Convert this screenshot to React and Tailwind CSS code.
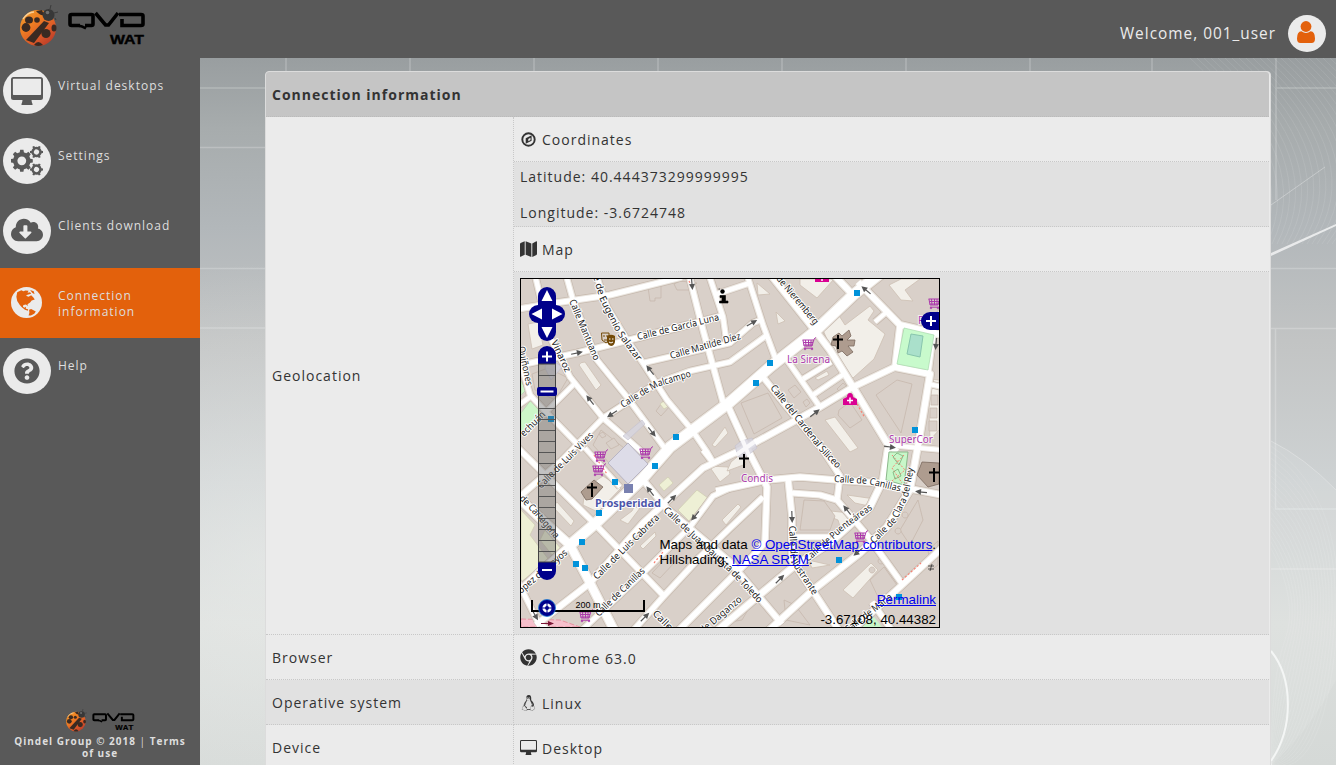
import React from "react";
import {
  FaCloudDownloadAlt,
  FaQuestionCircle,
  FaMap,
  FaChrome,
  FaLinux,
} from "react-icons/fa";

/* ---------- logo and icons ---------- */

function Logo({ className }) {
  return (
    <svg viewBox="0 0 126 42" className={className} aria-label="QVD WAT">
      <defs>
        <linearGradient id="bug" x1="0" y1="0" x2="0.8" y2="1">
          <stop offset="0" stopColor="#f0a030" />
          <stop offset="0.4" stopColor="#ee7d22" />
          <stop offset="0.7" stopColor="#dc5a28" />
          <stop offset="1" stopColor="#b83a2a" />
        </linearGradient>
      </defs>
      <g>
        <circle cx="18" cy="23" r="18" fill="url(#bug)" />
        <path d="M24 16L29 18L14 38L6 35Z" fill="#3a2a22" />
        <g fill="#3a2a22">
          <ellipse cx="9" cy="15" rx="4" ry="3.5" />
          <circle cx="17" cy="15" r="2.8" />
          <circle cx="6" cy="22.500" r="4.400" />
          <circle cx="26" cy="28.500" r="4.600" />
          <ellipse cx="34" cy="23" rx="2.500" ry="3.500" />
          <path d="M14 40Q18 34 23 40Q18 42 14 40Z" />
          <path d="M16 6Q20 11 24 10L22 5Z" />
        </g>
        <path d="M3 14Q8 7 14 7" stroke="#ffe9c0" strokeWidth="1.400" fill="none" opacity=".7" />
        <circle cx="28.500" cy="10" r="6" fill="#383838" />
        <circle cx="27.500" cy="7.500" r="1.800" fill="#707070" />
        <path d="M30 4L31 0M34 8L38 7M35 13L36 15" stroke="#333" strokeWidth=".8" />
      </g>
      <g fill="none" stroke="#000" strokeWidth="3.600">
        <path d="M60 20.500H51.500Q50 20.500 50 19V11Q50 9.500 51.500 9.500H71.500Q73 9.500 73 11V19Q73 20.500 71.500 20.500H65" />
        <path d="M58 20.500Q62 21 66 23.400" strokeWidth="2.600" />
        <path d="M75.500 8L85.500 20H88.500L98 8" />
        <path d="M99 9.500H121Q123 9.500 123 11V19Q123 20.500 121 20.500H102V14" />
      </g>
      <text x="90" y="39" fontFamily="Liberation Sans, sans-serif" fontWeight="bold" fontSize="13.500" stroke="#000" strokeWidth=".4" textLength="34" lengthAdjust="spacingAndGlyphs">WAT</text>
    </svg>
  );
}

const DesktopIcon = ({ className }) => (
  <svg viewBox="0 0 32 28" className={className} fill="currentColor">
    <path fillRule="evenodd" d="M2.500 0H29.500Q32 0 32 2.500V20.500Q32 23 29.500 23H20.500Q20.600 25.300 21.500 27V28H10.500V27Q11.400 25.300 11.500 23H2.500Q0 23 0 20.500V2.500Q0 0 2.500 0ZM2.600 1.800Q1.900 1.800 1.900 2.500V17.200Q1.900 18 2.600 18H29.400Q30.100 18 30.100 17.200V2.500Q30.100 1.800 29.400 1.800Z" />
  </svg>
);

function Gear({ x, y, r, teeth, offset }) {
  return (
    <g transform={`translate(${x} ${y}) rotate(${offset})`}>
      <circle r={r * 0.6} fill="none" stroke="currentColor" strokeWidth={r * 0.4} />
      {Array.from({ length: teeth }, (_, i) => (
        <path
          key={i}
          transform={`rotate(${(360 / teeth) * i}) scale(${r})`}
          d="M-.2 -.7L-.15 -1H.15L.2 -.7Z"
          fill="currentColor"
        />
      ))}
    </g>
  );
}

const CogsIcon = ({ className }) => (
  <svg viewBox="0 0 32 30" className={className}>
    <Gear x={10.8} y={14.8} r={11} teeth={8} offset={0} />
    <Gear x={25.5} y={6} r={6.5} teeth={6} offset={30} />
    <Gear x={25.5} y={23.5} r={6.5} teeth={6} offset={30} />
  </svg>
);

const UserIcon = ({ className }) => (
  <svg viewBox="0 0 18 22" className={className} fill="currentColor">
    <path d="M4.400 10.200Q9 13.600 13.600 10.200Q18 10.400 18 17.500Q18 22 14.500 22H3.500Q0 22 0 17.500Q0 10.400 4.400 10.200Z" />
    <circle cx="9" cy="5.500" r="5.400" />
  </svg>
);

const CompassIcon = ({ className }) => (
  <svg viewBox="0 0 15 15" className={className}>
    <circle cx="7.500" cy="7.500" r="6.200" fill="none" stroke="currentColor" strokeWidth="1.900" />
    <path fillRule="evenodd" fill="currentColor" d="M10.600 3.200V8.700L4.700 11.800V6.300ZM9.500 5.700L7.300 7V9.200L9.500 8Z" />
  </svg>
);

const GlobeIcon = ({ className }) => (
  <svg viewBox="0 0 30 30" className={className}>
    <circle cx="15" cy="15" r="15" fill="#ebebeb" />
    <g fill="#e3610c">
      <path d="M6 5.200L10 3.200L12 4L14 3.500L17 3.600L16 5.500L18.500 5L19.500 6.500L16 7.500L14.500 8.500L17 9.500L19.500 8L21.500 10L23 12.200L20 13L18.500 15L16 16.700L16.300 18.500L14.500 17L12 17.500L11.500 19L13 20L14.500 19L14.300 21L16.500 21.500L16.500 23L13.500 22L10.500 19.500L8.500 17.500L6 13.500L5.200 9.500Z" />
      <path d="M17.500 22L19.500 21.200L24 23.800L22.500 26L19.300 27.500L17 27.500L17.800 25Z" />
      <path d="M18.500 3L22 4L22.800 7L20.500 5.500Z" />
    </g>
  </svg>
);

/* ---------- sidebar ---------- */

const menu = [
  { label: "Virtual desktops", icon: <DesktopIcon className="h-7 w-8" /> },
  { label: "Settings", icon: <CogsIcon className="h-[30px] w-8" /> },
  { label: "Clients download", icon: <FaCloudDownloadAlt className="mb-0.5 h-[26px] w-8" /> },
  { label: "Connection information", icon: <GlobeIcon className="h-[31px] w-[31px]" />, active: true },
  { label: "Help", icon: <FaQuestionCircle className="h-[26px] w-[26px]" /> },
];

function Sidebar() {
  return (
    <aside className="flex w-[200px] shrink-0 flex-col bg-[#595959] text-[#dedede]">
      <nav>
        {menu.map((m) => (
          <a
            key={m.label}
            className={
              m.active
                ? "flex h-[70px] gap-[7px] bg-[#e3610c] pt-[10px] pl-[3px]"
                : "flex h-[70px] gap-[7px] pt-[10px] pl-[3px]"
            }
          >
            <span
              className={
                m.active
                  ? "flex h-[46px] w-12 shrink-0 items-center justify-center pt-0.5 pr-px"
                  : "flex h-[46px] w-12 shrink-0 items-center justify-center rounded-[50%] bg-[#ebebeb] text-[#595959]"
              }
            >
              {m.icon}
            </span>
            <span className="w-[125px] pt-[10px] text-xs leading-4 tracking-[1px]">{m.label}</span>
          </a>
        ))}
      </nav>
      <footer className="mt-auto flex flex-col items-center px-3 pb-[6px] text-center text-[10px] leading-3 font-bold tracking-[1px]">
        <Logo className="mb-[3px] h-[23px] w-[69px]" />
        <p className="w-[180px]">
          Qindel Group © 2018 <span className="font-normal">|</span> Terms of use
        </p>
      </footer>
    </aside>
  );
}

/* ---------- map ---------- */

const roads = [
  ["M518 309L555 303L610 295L682 277", 5],
  ["M535 275L541 300L550 337L570 377L603 418L642 452", 4.5],
  ["M566 275L573 300L597 360L627 397L666 450", 4.5],
  ["M594 268L607 307L627 340L643 363L667 400L692 430L707 452L714 464", 4.5],
  ["M516 366L577 353L637 338L722 316", 5],
  ["M643 363L730 343L753 323L763 319", 4.5],
  ["M560 462L603 418L620 407L657 383L690 371L730 362L767 335", 4.5],
  ["M689 275L703 330L723 402", 5],
  ["M709 275L723 317L727 345", 4.5],
  ["M717 294L750 283", 4.5],
  ["M747 275L763 325L776 360", 4.5],
  ["M882 272L853 295L813 333L770 367L730 402L670 447L643 478L597 522L570 545", 10],
  ["M508 488L540 518L570 545L590 583L615 632", 8],
  ["M771 275L817 333L830 350L853 387L887 443L897 452", 6],
  ["M834 275L853 295", 6],
  ["M858 282L900 325L942 335", 6],
  ["M900 325L895 367L853 387L820 407L747 447L703 468L643 523L590 583L536 625", 5.5],
  ["M875 322L889 310", 4],
  ["M727 404L748 450L767 487L765 542L753 556L675 634", 5.5],
  ["M895 367L930 374L919 440L910 490L887 527L860 553L813 590L765 634", 6],
  ["M942 312L935 320L928 374", 5],
  ["M929 384L942 387", 4],
  ["M763 377L787 407L823 450L840 476L837 500", 5],
  ["M787 360L820 407", 4.5],
  ["M803 379L831 362", 4.5],
  ["M813 395L844 374", 4.5],
  ["M716 491L767 480L800 477L837 480L880 483L942 495", 5.5],
  ["M888 448L883 480L870 507L830 543L793 567L763 592L718 630", 6],
  ["M788 478L792 517L792 560L817 597L840 632", 5.5],
  ["M792 493L820 495L837 500L867 535L903 585", 5],
  ["M792 537L830 537", 5],
  ["M763 497L730 528L700 557L663 597L632 632", 5],
  ["M643 480L668 510L730 562L760 598L782 624", 5.5],
  ["M517 447L593 522L663 595", 5],
  ["M580 632L643 573L690 527L713 496L730 488", 4.5],
  ["M516 594L545 567L570 545", 6],
  ["M516 578L538 622L548 630", 4.5],
  ["M510 505L560 462", 5],
  ["M585 448L620 487", 4],
  ["M514 340L530 395L547 413L583 450", 4.5],
  ["M516 407L530 397", 4],
  ["M547 411L574 384", 4],
  ["M942 548L902 585L850 632", 5.5],
  ["M872 602L893 632", 5],
  ["M703 450L714 464", 4.5],
  ["M887 445L942 450", 4],
];

const yards = [
  "M528 324L538 322L543 345L532 349Z",
  "M579 365Q580 362 585 362L601 385L596 390Z",
  "M757 283L770 294L758 295Z",
  "M776 312L785 321L778 324Z",
  "M800 285L817 298L834 279L800 279Z",
  "M823 330L838 314L845 325L870 306L874 311L868 320L885 334L874 359L853 378L840 370Z",
  "M889 285L901 279H920L905 290L913 301L901 300Z",
  "M880 393L899 384L905 386L899 428Z",
  "M749 411L766 400L776 416L759 428Z",
  "M825 420L835 417L858 448L850 452Z",
  "M585 488L603 476L621 488L598 512L583 505Z",
  "M620 520L632 511L634 507L640 508L628 524Z",
  "M709 466L720 482L730 474L728 467Z",
  "M712 445L725 427L728 433L715 447Z",
  "M811 509L850 513L855 524L843 536L838 520Z",
  "M843 590L871 563L878 570L853 598Z",
  "M731 462L742 453L746 464L727 471Z",
  "M557 502L574 521L571 526L553 507Z",
  "M815 378L827 371L829 375L818 380Z",
  "M808 560L830 565L812 568Z",
  "M722 520L738 504L741 507L726 525Z",
  "M640 546L655 532L656 536L643 549Z",
  "M930 440L939 430V380L928 379Z",
  "M847 495L875 499L869 506L855 503Z",
];

const buildings = [
  "M648 287H655V284H661V298H655V301H650Z",
  "M674 284L680 281L697 283L690 290L677 290Z",
  "M656 411L664 400L671 405L661 416Z",
  "M532 374L548 368L568 378L555 400L535 390Z",
  "M593 445L601 430L624 448L610 464Z",
  "M788 390L795 385L801 392L794 398Z",
  "M803 402L807 399L810 403L806 407Z",
  "M837 389L843 383L849 388L842 394Z",
  "M839 410L850 402L862 420L850 428L838 415Z",
  "M876 395L897 380L912 384L901 433Z",
  "M741 403L768 393L782 418L754 434Z",
  "M652 573L666 558L675 562L660 578Z",
  "M804 500L824 501L835 516L830 530L800 530Z",
  "M870 580L884 567L899 588L880 601Z",
  "M900 530L918 500L923 520L910 545Z",
  "M928 550L938 541V565L931 570Z",
  "M735 603L752 603L742 620L730 622Z",
  "M784 600L795 605L810 625L786 620Z",
  "M931 395H938V405H931ZM930 408H937V418H930ZM929 421H937V431H929Z",
  "M905 512a3 3 0 1 0 .1 0M898 528a3 3 0 1 0 .1 0M881 558a3 3 0 1 0 .1 0M872 567a3 3 0 1 0 .1 0",
  "M599 434L603 432L606 436L602 438ZM606 443L614 438L619 445L611 449Z",
];

const labels = [
  ["Calle de García Luna", "M638 340L720 320", 84],
  ["Calle Mantuano", "M569 301L594 361", 65],
  ["Calle de Eugenio Salazar", "M588 260L600 300L617 334L640 365", 114],
  ["Calle Matilde Díez", "M671 359L741 339", 73],
  ["Calle de Malcampo", "M623 408L657 387L693 376", 76],
  ["Vinaroz", "M551 342L566 374", 34],
  ["Quiñones", "M518 347L527 389", 40],
  ["echuán", "M524 437L546 415", 31],
  ["Calle de Luis Vives", "M541 489L595 435", 75],
  ["de Cartagena", "M519 499L532 512L555 539", 54],
  ["ópez de Hoyos", "M521 594L569 553", 62],
  ["Calle de Luis Cabrera", "M597 580L660 518", 88],
  ["Calle de Canillas", "M599 617L646 571", 65],
  ["Calle de Juan Bautista de Toledo", "M663 511L695 541L731 574L760 605", 133],
  ["Calle", "M652 614L672 634", 24],
  ["de Daganzo", "M703 634L743 600", 52],
  ["de Nieremberg", "M776 279L815 326", 60],
  ["Calle del Cardenal Siliceo", "M770 388L820 451L838 470", 105],
  ["Calle de Canillas", "M834 482L868 484L902 492", 67],
  ["Calle de Puenteáreas", "M808 562L845 529L874 508", 84],
  ["Calle de Clara del Rey", "M874 544L896 522L908 497L915 462", 88],
  ["Calle de Ilustrante", "M789 526L791 562L814 597", 76],
  ["Calle de María", "M848 633L893 598", 57],
];

const stops = [
  [857, 293], [770, 363], [756, 383], [676, 437], [655, 466], [615, 482], [599, 513],
  [582, 542], [576, 564], [585, 568], [551, 419], [915, 430], [839, 560], [899, 597],
];
const carts = [[809, 344], [646, 453], [601, 456], [599, 470], [586, 616], [861, 537], [935, 303]];
const arrows = [
  [577, 353, -12], [590, 400, 232], [650, 370, 232], [612, 414, 146], [652, 432, 52],
  [692, 284, 85], [752, 323, -30], [866, 290, 220], [815, 413, -38], [650, 491, 232],
  [672, 499, -45], [695, 516, 130], [645, 617, -45], [792, 517, 88], [847, 510, 232],
  [780, 579, -45], [858, 552, 140], [921, 492, 186], [890, 447, 8], [936, 344, 95], [535, 615, 60],
];
const crosses = [[838, 342], [744, 461], [592, 490], [934, 475]];

function StreetMap() {
  return (
    <svg viewBox="521 279 418 348" className="block h-full w-full">
      <rect x="521" y="279" width="418" height="348" fill="#d9d0c9" />
      <g fill="#f2efe9" stroke="#cdbfb3" strokeWidth=".8">
        {yards.map((d) => <path key={d} d={d} />)}
      </g>
      <g fill="#d9d0c9" stroke="#c4b5a9" strokeWidth=".7">
        {buildings.map((d) => <path key={d} d={d} />)}
      </g>
      <g fill="#eef0d5" stroke="#cfccb0" strokeWidth=".7">
        <path d="M678 510L697 490L708 498L689 521Z" />
        <path d="M659 485L668 477L673 483L664 491Z" />
        <path d="M521 510L535 525L530 535L549 560L521 582Z" />
        <path d="M545 530L562 550L553 556L540 540Z" />
        <path d="M660 404L665 400L669 406L664 409Z" />
      </g>
      <path d="M521 413L531 400L545 414L521 436Z M521 381L526 390L521 395Z" fill="#cdf7c9" stroke="#b4d7ae" strokeWidth=".7" />
      <path d="M862 627L874 617L882 627Z" fill="#c8f7c9" />
      <path d="M521 619L560 620L580 627H521Z" fill="#f6c0cc" stroke="#e892a0" strokeDasharray="5 2" />

      <g fill="none" strokeLinejoin="round">
        {roads.map(([d, w]) => <path key={d} d={d} stroke="#c6b9ae" strokeWidth={w + 3.6} />)}
        {roads.map(([d, w]) => <path key={d} d={d} stroke="#ebe6e0" strokeWidth={w + 2.2} />)}
        {roads.map(([d, w]) => <path key={d} d={d} stroke="#ffffff" strokeWidth={w} />)}
      </g>

      <path d="M904 328L934 335L928 370L897 364Z" fill="#c8facc" stroke="#a9d8ae" strokeWidth=".7" />
      <path d="M911 334L923 336L920 357L907 354Z" fill="#aae0cb" stroke="#88c5ad" />
      <path d="M889 452L908 452L904 485L886 480Z" fill="#c8f7c9" stroke="#8bb88b" />
      <path d="M892 455L905 470L892 481M904 455L892 468L902 483" fill="none" stroke="#fa8072" strokeWidth="1" strokeDasharray="2 1.500" />
      <path d="M893 457L897 453L903 456L899 465ZM893 472L898 469L901 476L895 479Z" fill="none" stroke="#6fa56f" strokeWidth=".7" />

      <path d="M608 463L628 443L648 464L628 484Z" fill="#dddce8" stroke="#b8b5c4" />
      <path d="M623 436L642 420L645 424L628 440Z M735 446L741 441L752 438L757 448L747 456L738 457Z M548 357L562 367L551 380L545 368Z" fill="#d6d5e0" fillOpacity=".8" stroke="#c2bfcc" strokeWidth=".6" />
      <path d="M736 455L757 440M742 439L750 458" stroke="#fff" strokeWidth="4" strokeOpacity=".8" />
      <g fill="#ae9c8f" stroke="#7b6a5e" strokeWidth=".8">
        <path d="M833 337L839 333L842 336L849 330L851 336L847 340L855 340L854 346L848 346L853 352L847 356L842 351L838 353L836 346L831 345Z" />
        <path d="M581 492L594 480L603 487L592 499L586 500Z" />
        <path d="M917 475L922 462L939 463V484L928 487Z" />
      </g>
      <path d="M857 404L865 418M689 281L691 285M902 580L921 563M654 563L663 552M594 455L607 474" stroke="#fa8072" strokeWidth="1.200" strokeDasharray="2 2" />

      {arrows.map(([x, y, a]) => (
        <g key={x + "-" + y} transform={`translate(${x} ${y}) rotate(${a})`}>
          <path d="M-6 0H2" stroke="#555" strokeWidth="1.200" />
          <path d="M0 -3L6 0L0 3Z" fill="#555" />
        </g>
      ))}

      <g fontFamily="Noto Sans, sans-serif" fontSize="9.700" fill="#222" stroke="#fff" strokeWidth="2" paintOrder="stroke" strokeLinejoin="round">
        {labels.map(([t, d, len], i) => (
          <React.Fragment key={d}>
            <path id={"street" + i} d={d} fill="none" stroke="none" />
            <text><textPath href={"#street" + i} textLength={len} lengthAdjust="spacingAndGlyphs">{t}</textPath></text>
          </React.Fragment>
        ))}
      </g>

      {stops.map(([x, y]) => <rect key={x} x={x - 3} y={y - 3} width="6" height="6" fill="#0092da" />)}
      <rect x="624" y="484" width="9" height="9" fill="#7981b0" />
      {carts.map(([x, y]) => (
        <g key={x} transform={`translate(${x} ${y})`} stroke="#ac39ac" fill="none">
          <path d="M-6.500 -4H4M-5.500 -1.500H4M-5 1H3.500M-6 -4L-5 2H3L5 -5L7 -6.500M-3.500 -4L-3 2M-.5 -4V2M2 -4V2M-5 4.200H4" strokeWidth="1" />
          <circle cx="-4" cy="5" r=".8" /><circle cx="3" cy="5" r=".8" />
        </g>
      ))}
      {crosses.map(([x, y]) => (
        <path key={x} d={`M${x} ${y - 7}V${y + 7}M${x - 5} ${y - 2.500}H${x + 5}`} stroke="#000" strokeWidth="2" />
      ))}
      <circle cx="722.500" cy="291.500" r="2.200" />
      <path d="M718.500 289H720M720 295.500H725.500V301H728V303H719.500V301H722V297.500H720Z" fill="#000" stroke="#000" strokeWidth=".6" />
      <path d="M601.500 333H609V341L606 343L602 340Z M603 336H605M606 336H608M604 340H607" fill="none" stroke="#734a08" />
      <path d="M607 336Q611 333.500 615 336V342Q614 346 611 346Q608 345 607 342Z" fill="#734a08" />
      <path d="M609 339H610.500M612 339H613.500M609 342Q611 344 613 342" stroke="#fff" fill="none" />
      <path d="M843 405V399L847 397Q847 393 850 393Q853 393 853 397L857 399V405Z M815 279H829V282H815Z" fill="#da0092" />
      <path d="M850 397.500V403.500M847 400.500H853M822 279V281" stroke="#fff" strokeWidth="1.500" />
      <path d="M928 566H934M928 569H934M932 564L930 571" stroke="#333" strokeWidth=".8" />
      <path d="M541 623.500H549" stroke="#7c1636" /><path d="M548 621L554 623.500L548 626Z" fill="#7c1636" />

      <g fontFamily="Noto Sans, sans-serif" fontSize="10" fill="#ac39ac" stroke="#fff" strokeWidth="2" strokeOpacity=".7" paintOrder="stroke">
        <text x="787" y="363" textLength="43">La Sirena</text>
        <text x="889" y="442.500" textLength="44">SuperCor</text>
        <text x="741" y="482" textLength="32">Condis</text>
        <text x="918" y="324">P</text>
        <text x="595" y="507" fontWeight="bold" fontSize="11" fill="#4d56aa" strokeOpacity="1" textLength="66" lengthAdjust="spacingAndGlyphs">Prosperidad</text>
      </g>

      {/* pan and zoom controls */}
      <g fill="#00008b">
        <rect x="538" y="287" width="18" height="54" rx="9" />
        <rect x="529" y="305" width="36" height="18" rx="9" />
        <path d="M538 364V355A9 9 0 0 1 556 355V364Z M538 562V571A9 9 0 0 0 556 571V562Z" />
        <path d="M939 312H930A9 9 0 0 0 930 330H939Z" />
      </g>
      <path d="M547 290L552.500 301H541.500Z M547 338L552.500 327H541.500Z M531.500 314L542 308.500V319.500Z M562.500 314L552 308.500V319.500Z" fill="#fff" />
      <rect x="538.500" y="364" width="17" height="198" fill="#666" fillOpacity=".4" stroke="#444" />
      <path d="M539 375.500H555M539 408.500H555M539 419.500H555M539 430.500H555M539 441.500H555M539 452.500H555M539 463.500H555M539 474.500H555M539 485.500H555M539 496.500H555M539 507.500H555M539 518.500H555M539 529.500H555M539 540.500H555M539 551.500H555" stroke="#555" />
      <rect x="537" y="387" width="20" height="9" rx="2" fill="#00008b" />
      <path d="M540.500 391.500H553.500M542 356.500H552M547 351.500V361.500M542 570H552M926 321H936M931 316V326" stroke="#fff" strokeWidth="2" />

      {/* scale bar */}
      <path d="M532 600V611H644V600" fill="none" stroke="#000" strokeWidth="2" />
      <text x="588" y="608" textAnchor="middle" fontFamily="Liberation Sans, sans-serif" fontSize="9">200 m</text>
      <circle cx="547" cy="608" r="8.500" fill="#00008b" stroke="#2383d6" strokeWidth=".8" />
      <circle cx="547" cy="608" r="3.300" fill="none" stroke="#fff" strokeWidth="2.600" />
      <path d="M547 603V613M542 608H552" stroke="#00008b" strokeWidth="1" />
    </svg>
  );
}

function MapBox() {
  return (
    <div className="relative h-[350px] w-[420px] overflow-hidden border border-black font-['Liberation_Sans',sans-serif] text-[13.33px] leading-[15px] tracking-normal text-black">
      <StreetMap />
      <p className="absolute top-[258px] right-[2.5px] w-[277px] whitespace-nowrap">
        Maps and data <a className="text-[#0000ee] underline">© OpenStreetMap contributors</a>.
        <br />
        Hillshading: <a className="text-[#0000ee] underline">NASA SRTM</a>.
      </p>
      <a className="absolute top-[313px] right-[3px] text-[#0000ee] underline">Permalink</a>
      <span className="absolute top-[333px] right-[3px]">-3.67108, 40.44382</span>
    </div>
  );
}

/* ---------- page ---------- */

function Backdrop() {
  return (
    <svg viewBox="200 58 1136 707" className="absolute inset-0 h-full w-full">
      <defs>
        <linearGradient id="sky" x1="0" y1="0" x2="0" y2="1">
          <stop offset="0" stopColor="#999ea0" />
          <stop offset=".1" stopColor="#a7acad" />
          <stop offset=".24" stopColor="#b2b7ba" />
          <stop offset=".4" stopColor="#c2c4c4" />
          <stop offset=".6" stopColor="#ced2d3" />
          <stop offset=".8" stopColor="#dbdedc" />
          <stop offset="1" stopColor="#d5d9d7" />
        </linearGradient>
        <radialGradient id="glow" cx="265" cy="560" r="300" gradientUnits="userSpaceOnUse">
          <stop offset="0" stopColor="#f2f4f2" stopOpacity=".45" />
          <stop offset="1" stopColor="#f2f4f2" stopOpacity="0" />
        </radialGradient>
      </defs>
      <rect x="200" y="58" width="1136" height="707" fill="url(#sky)" />
      <rect x="200" y="58" width="65" height="707" fill="url(#glow)" />
      <path d="M200 88H265M200 147.500H265M200 268.500H265M200 328H265M286 58V72M410 58V72M534 58V72M658 58V72M782 58V72M906 58V72M1030 58V72M1152 58V72M1276 58V200M1276 88H1336M1271 268.500H1336M1271 328.500H1336M1275.500 328V509H1336M1271 569H1336" fill="none" stroke="#fff" strokeOpacity=".22" strokeWidth="1.500" />
      <g fill="none" stroke="#fff" strokeOpacity=".09">
        {Array.from({ length: 24 }, (_, i) => (
          <path key={i} d={`M${1190 + i * 7} 58Q${1300 + i * 7} 160 ${1262 + i * 5} 244`} />
        ))}
        {Array.from({ length: 18 }, (_, i) => (
          <path key={i} d={`M1271 ${446 + i * 6}Q${1350 - i * 3} ${500 + i * 6} ${1336 - i * 3} 640T1271 765`} />
        ))}
      </g>
      <path d="M1271 441Q1305 458 1336 490V680Q1310 730 1271 765Z" fill="#fff" fillOpacity=".09" />
      <path d="M1271 441Q1305 458 1336 490" fill="none" stroke="#fff" strokeOpacity=".25" />
      <path d="M1271 253L1336 224V226L1271 256Z" fill="#fff" fillOpacity=".7" />
      <path d="M1271 205L1325 167" stroke="#fff" strokeOpacity=".3" />
      <path d="M1271 651C1293 678 1294 728 1271 761" fill="none" stroke="#f4f6f5" strokeWidth="2" />
    </svg>
  );
}

const cell = "flex items-center gap-[5px] border-b border-dotted border-[#c8c8c8] px-[6px]";

function InfoRow({ name, icon, value, tone }) {
  return (
    <div className={tone === "dark" ? "flex h-[45px] bg-[#e1e1e1]" : "flex h-[45px] bg-[#ebebeb]"}>
      <div className={cell + " w-[248px] border-r pt-0.5"}>{name}</div>
      <div className={cell + " flex-1 pt-[3px]"}>
        <span className="flex w-[17px] justify-center">{icon}</span>
        {value}
      </div>
    </div>
  );
}

export default function App() {
  return (
    <div className="flex h-[765px] w-[1336px] flex-col overflow-hidden font-['Open_Sans',sans-serif] text-[#333]">
      <header className="flex h-[58px] shrink-0 items-center justify-between bg-[#595959] pr-[10px] pl-5">
        <Logo className="mb-[7px] h-[42px] w-[126px]" />
        <div className="flex items-center gap-3 pt-2">
          <span className="pt-px text-[15.4px] tracking-[1px] text-[#ebebeb]">Welcome, 001_user</span>
          <span className="flex h-[37px] w-[38px] items-center justify-center rounded-[50%] bg-[#ebebeb] pr-0.5 pb-[3px] text-[#e3610c]">
            <UserIcon className="h-[22px] w-[18px]" />
          </span>
        </div>
      </header>
      <div className="flex min-h-0 flex-1">
        <Sidebar />
        <main className="relative flex-1 overflow-hidden">
          <Backdrop />
          <section className="relative mt-[13px] ml-[65px] w-[1006px] rounded-t border border-[#dcdcdc] bg-[#ebebeb] pr-px text-sm tracking-[1px]">
            <h1 className="flex h-[45px] items-center rounded-t-[3px] border-b border-dotted border-[#bbb] bg-[#c5c5c5] px-[6px] pt-0.5 font-bold">
              Connection information
            </h1>
            <div className="flex h-[518px]">
              <div className={cell + " w-[248px] border-r bg-[#ebebeb]"}>Geolocation</div>
              <div className="flex flex-1 flex-col">
                <div className={cell + " h-[45px] pt-0.5"}>
                  <span className="flex w-[17px] justify-center"><CompassIcon className="mb-0.5 h-[15px] w-[15px]" /></span>
                  Coordinates
                </div>
                <div className="flex h-[65px] flex-col gap-4 border-b border-dotted border-[#c8c8c8] bg-[#e1e1e1] px-[6px] pt-[5px] leading-5">
                  <p>Latitude: 40.444373299999995</p>
                  <p>Longitude: -3.6724748</p>
                </div>
                <div className={cell + " h-[45px] pt-0.5"}>
                  <FaMap className="mb-0.5 h-[18px] w-[17px]" preserveAspectRatio="none" />
                  Map
                </div>
                <div className="flex-1 border-b border-dotted border-[#c8c8c8] bg-[#e1e1e1] p-[6px]">
                  <MapBox />
                </div>
              </div>
            </div>
            <InfoRow name="Browser" icon={<FaChrome className="mb-0.5 h-[17px] w-[17px]" />} value="Chrome 63.0" />
            <InfoRow name="Operative system" icon={<FaLinux className="mb-0.5 h-4 w-[15px]" />} value="Linux" tone="dark" />
            <InfoRow name="Device" icon={<DesktopIcon className="mb-[3px] h-[15px] w-[17px]" />} value="Desktop" />
          </section>
        </main>
      </div>
    </div>
  );
}
